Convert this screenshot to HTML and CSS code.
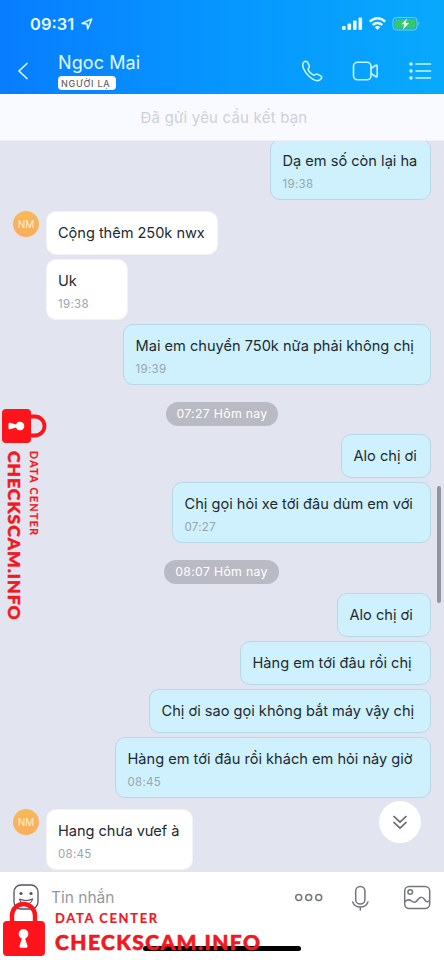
FILE: index.html
```html
<!DOCTYPE html>
<html lang="vi">
<head>
<meta charset="utf-8">
<title>Ngoc Mai</title>
<link rel="stylesheet" href="styles.css">
</head>
<body>
<div class="phone">
  <header class="header">
    <div class="status">
      <span class="clock">09:31</span>
      <svg class="loc" width="12" height="12" viewBox="0 0 12 12"><path d="M1 5.4 10.7 1 6.7 11 6 6.1Z" fill="none" stroke="#e8f8ff" stroke-width="1.5" stroke-linejoin="round"/></svg>
      <svg class="signals" width="80" height="16" viewBox="0 0 80 16">
        <g fill="#e8fbff"><rect x="0" y="10" width="3.6" height="4" rx="1"/><rect x="5.5" y="7.5" width="3.6" height="6.5" rx="1"/><rect x="11" y="4.5" width="3.6" height="9.5" rx="1"/><rect x="16.5" y="1.5" width="3.6" height="12.5" rx="1"/></g>
        <g fill="none" stroke="#e8fbff" stroke-width="2.4"><path d="M27.8 5.6Q35.5-1.2 43.2 5.6"/><path d="M30.7 8.9q4.8-4 9.6 0"/></g>
        <path d="M32.8 11q2.7-2 5.4 0L35.5 14Z" fill="#e8fbff"/>
        <rect x="51" y="1.5" width="24" height="12.5" rx="3.5" fill="none" stroke="#72d5d2"/>
        <rect x="52.5" y="3" width="21" height="9.5" rx="2" fill="#38c86b"/><path d="M76.5 5.5v4q2-2 0-4" fill="#72d5d2"/>
        <path d="M65 2.5 59.5 8.3H62.5L61 13.5 67 7H63.7Z" fill="#fff"/>
      </svg>
    </div>
    <div class="titlebar">
      <svg class="back" width="12" height="20" viewBox="0 0 12 20"><path d="M10.5 2 2 10l8.500 8" fill="none" stroke="#dff7ff" stroke-width="1.6"/></svg>
      <div class="who"><h1>Ngoc Mai</h1><span class="tag">NGƯỜI LẠ</span></div>
      <svg class="actions" width="134" height="24" viewBox="0 0 134 24" fill="none" stroke="#c5f6ff" stroke-width="1.6" stroke-linejoin="round" stroke-linecap="round">
        <path transform="translate(2.500 0)" d="M3.300 3.200C5 1.700 6.700 2.200 7.500 4l1.300 3.100c.6 1.500-1.700 2.600-1.200 3.700 1.100 2.300 3 4.100 5.300 5.300 1.300.6 2.300-1.600 3.800-1l3 1.500c2.400 1.200 1.700 3-.3 4.300-2.700 1.700-7.200-.2-11.100-3.900C3.700 12.800.5 5.700 3.300 3.200Z"/>
        <rect x="55.500" y="3.300" width="17.500" height="17.500" rx="4"/><path d="M73 9.500l4.500-3q1.700-1 1.700.8v9.400q0 1.800-1.700.8L73 14.500"/>
        <path d="M118 5h14.500M118 12h14.500M118 19h14.500"/><g fill="#c5f6ff" stroke="none"><circle cx="113" cy="5" r="1.800"/><circle cx="113" cy="12" r="1.800"/><circle cx="113" cy="19" r="1.800"/></g>
      </svg>
    </div>
  </header>
  <div class="request">Đã gửi yêu cầu kết bạn</div>
  <main class="chat">
    <div class="msg out timed first w160"><p>Dạ em số còn lại ha</p><time>19:38</time></div>
    <div class="incoming gap-a"><span class="avatar">NM</span><div class="msg in w172"><p>Cộng thêm 250k nwx</p></div></div>
    <div class="msg in timed indent w82"><p>Uk</p><time>19:38</time></div>
    <div class="msg out timed w308"><p>Mai em chuyển 750k nữa phải không chị</p><time>19:39</time></div>
    <div class="day day-a">07:27 Hôm nay</div>
    <div class="msg out w90"><p>Alo chị ơi</p></div>
    <div class="msg out timed w259"><p>Chị gọi hỏi xe tới đâu dùm em với</p><time>07:27</time></div>
    <div class="day day-b">08:07 Hôm nay</div>
    <div class="msg out w94"><p>Alo chị ơi</p></div>
    <div class="msg out w191"><p>Hàng em tới đâu rồi chị</p></div>
    <div class="msg out w282"><p>Chị ơi sao gọi không bắt máy vậy chị</p></div>
    <div class="msg out timed w316"><p>Hàng em tới đâu rồi khách em hỏi nảy giờ</p><time>08:45</time></div>
    <div class="incoming gap-b"><span class="avatar">NM</span><div class="msg in timed w146"><p>Hang chưa vưef à</p><time>08:45</time></div></div>
    <div class="scrollbar"></div>
    <div class="jump"><svg width="16" height="15" viewBox="0 0 16 15"><path d="M1.500 1 8 7l6.500-6M1.500 7 8 13l6.500-6" fill="none" stroke="#666" stroke-width="1.7"/></svg></div>
  </main>
  <footer class="composer">
    <svg class="smile" width="26" height="26" viewBox="0 0 26 26"><rect x="1" y="1" width="24" height="24" rx="7" fill="none" stroke="#50545c" stroke-width="1.300"/><circle cx="8" cy="9.500" r="1.600" fill="#50545c"/><circle cx="18" cy="9.500" r="1.600" fill="#50545c"/><path d="M6.500 15q6.500 3 13 0q-1 5-6.500 5t-6.500-5" fill="none" stroke="#50545c" stroke-width="1.200"/></svg>
    <span class="placeholder">Tin nhắn</span>
    <svg class="tools" width="138" height="28" viewBox="0 0 138 28" fill="none" stroke="#73767b" stroke-width="1.500" stroke-linecap="round">
      <circle cx="4.700" cy="13.500" r="3"/><circle cx="14.700" cy="13.500" r="3"/><circle cx="24.700" cy="13.500" r="3"/>
      <rect x="61.700" y="2.500" width="9.200" height="17.500" rx="4.600"/><path d="M58.700 18q1.800 5 7.600 5t7.600-5M66.300 23v3"/>
      <rect x="110.700" y="2.500" width="25" height="22" rx="4.500"/><circle cx="116.200" cy="8" r="2.300"/><path d="M111 17.500q3.500-3 6.500-.5c3 2.500 4.500 1 6.500-1.500q3.800-4.500 7 .5 1.800 2.800 4 1"/>
    </svg>
  </footer>

  <div class="home"></div>
  <div class="mark mark-side">
    <svg width="45" height="34" viewBox="0 0 45 34"><rect x="0" y="0" width="29" height="34" rx="4" fill="#ff141b"/><path d="M28 7.500h5a9.500 9.500 0 0 1 0 19h-5" fill="none" stroke="#ff141b" stroke-width="3.800"/><path d="M14 15.500a4.300 4.300 0 1 1 0 3l-6 1.800q-1.500.3-1.500-1.200v-4.200q0-1.500 1.500-1.200Z" fill="#fff"/></svg>
    <div class="side-text"><span class="small">DATA CENTER</span><strong>CHECKSCAM.INFO</strong></div>
  </div>
  <div class="mark mark-bottom">
    <svg width="42" height="55" viewBox="0 0 42 55"><path d="M9 22V14.500a11.500 11.500 0 0 1 23 0v7.500" fill="none" stroke="#ff141b" stroke-width="4.400"/><rect x="0" y="20" width="42" height="35" rx="4" fill="#ff141b"/><path d="M18.800 37.500a4.900 4.900 0 1 1 3.400 0l2.300 7.500q.4 1.700-1.300 1.700h-5.400q-1.700 0-1.300-1.700Z" fill="#fff"/></svg>
    <div class="bottom-text"><span class="small">DATA CENTER</span><strong>CHECKSCAM.INFO</strong></div>
  </div>
</div>
</body>
</html>
```
FILE: styles.css
```css
* { box-sizing: border-box; }
body { margin: 0; font-family: Inter, "Noto Sans", sans-serif; }
p, h1 { margin: 0; font-weight: 400; }
svg { display: block; flex: none; }
.phone { position: relative; width: 444px; height: 960px; overflow: hidden; display: flex; flex-direction: column; background: #fff; }

.header { height: 94px; flex: none; background: linear-gradient(90deg, #087dff 0, #0695ff 48%, #08a9fc 100%); color: #e2f7ff; }
.status { height: 48px; display: flex; align-items: center; padding: 0 25px 0 30px; }
.clock { width: 47px; font-size: 16.5px; font-weight: 600; line-height: 20px; white-space: nowrap; }
.loc { margin-left: 4px; }
.signals { margin-left: auto; margin-right: -3px; }
.titlebar { height: 46px; display: flex; align-items: flex-start; padding: 0 12px 0 17px; }
.back { margin-top: 13px; }
.who { margin: 4px 0 0 29px; }
.who h1 { font-size: 18px; line-height: 22px; white-space: nowrap; letter-spacing: .1px; }
.tag { display: block; width: 58px; height: 14px; margin-top: 2px; padding-left: 3px; border-radius: 4px; background: #fff; color: #666; font-size: 9px; line-height: 15px; letter-spacing: .75px; font-weight: 500; white-space: nowrap; }
.actions { margin: 11px 0 0 auto; }

.request { height: 46px; flex: none; background: #f9faff; color: #cfd0d5; text-align: center; font-size: 15px; line-height: 48px; letter-spacing: .2px; padding-left: 4px; }

.chat { position: relative; height: 732px; flex: none; padding-right: 13px; background: #e2e5ef; border-top: 1px solid #eff0f4; overflow: hidden; display: flex; flex-direction: column; align-items: flex-end; }
.msg { height: 44px; flex: none; border-radius: 10px; padding: 11px 12px 0 11.5px; margin-bottom: 4px; color: #202a30; font-size: 14.6px; line-height: 20px; white-space: nowrap; }
.msg.timed { height: 61px; }
.msg time { display: block; margin-top: 5px; color: #96a6ae; font-size: 11.5px; line-height: 16px; letter-spacing: .3px; }
.out { background: #cff1fd; border: 1px solid #b5d9e6; }
.in { padding-left: 11px; background: #fff; border: 1px solid #f1f3f8; }
.in p { letter-spacing: -.04px; }
.first { margin-top: -2px; }
.incoming { align-self: flex-start; display: flex; padding-left: 13px; }
.avatar { width: 26px; height: 26px; flex: none; margin-right: 7px; border-radius: 50%; background: linear-gradient(#f7b957, #fbad5b); color: #fff0d4; font-size: 10px; line-height: 26px; text-align: center; }
.gap-a { margin-top: 7px; }
.gap-b { margin-top: 7px; }
.indent { align-self: flex-start; margin-left: 46px; }
.day { height: 24px; flex: none; align-self: flex-start; border-radius: 12px; background: #b9bac4; color: #fff; text-align: center; font-size: 12.3px; line-height: 24px; letter-spacing: .3px; white-space: nowrap; }
.day-a { width: 112px; margin: 13px 0 8px 166px; }
.day-b { width: 115px; margin: 13px 0 9px 164px; }

.w82 { width: 82px; }
.w90 { width: 90px; }
.w94 { width: 94px; }
.w146 { width: 147px; }
.w160 { width: 161px; }
.w172 { width: 172px; }
.w191 { width: 191px; }
.w259 { width: 259px; }
.w282 { width: 282px; }
.w308 { width: 308px; }
.w316 { width: 316px; }

.scrollbar { position: absolute; left: 437px; top: 345px; width: 4px; height: 117px; border-radius: 2px; background: #9295a0; }
.jump { position: absolute; left: 379px; top: 660px; width: 42px; height: 42px; border-radius: 50%; background: #fff; display: flex; align-items: center; justify-content: center; }

.composer { height: 54px; flex: none; display: flex; align-items: flex-start; padding: 12px 12px 0 13px; }
.placeholder { margin: 3px 0 0 12px; color: #9598a0; font-size: 15.5px; line-height: 22px; white-space: nowrap; }
.tools { margin-left: auto; }
.home { position: absolute; left: 143px; top: 946px; width: 158px; height: 5px; border-radius: 3px; background: #000; }

.mark { position: absolute; color: #f2181f; font-family: Lato, sans-serif; white-space: nowrap; }
.mark-side { left: 2px; top: 409px; }
.side-text { writing-mode: vertical-rl; margin: 8px 0 0 2px; display: flex; flex-direction: column; width: 36px; }
.side-text .small { font-size: 10.5px; line-height: 12px; font-weight: 700; letter-spacing: 1.45px; -webkit-text-stroke: .2px #f2181f; }
.side-text strong { margin-right: 4px; font-size: 17.5px; line-height: 20px; font-weight: 900; letter-spacing: 1px; -webkit-text-stroke: .5px #f2181f; }
.mark-bottom { left: 3px; top: 901px; display: flex; }
.bottom-text { display: flex; flex-direction: column; margin: 9px 0 0 10px; }
.bottom-text .small { font-size: 13px; line-height: 16px; font-weight: 700; letter-spacing: 1.6px; -webkit-text-stroke: .2px #f2181f; }
.bottom-text strong { margin-top: 4px; font-size: 21px; line-height: 24px; font-weight: 900; letter-spacing: 1.4px; -webkit-text-stroke: .6px #f2181f; }
```
